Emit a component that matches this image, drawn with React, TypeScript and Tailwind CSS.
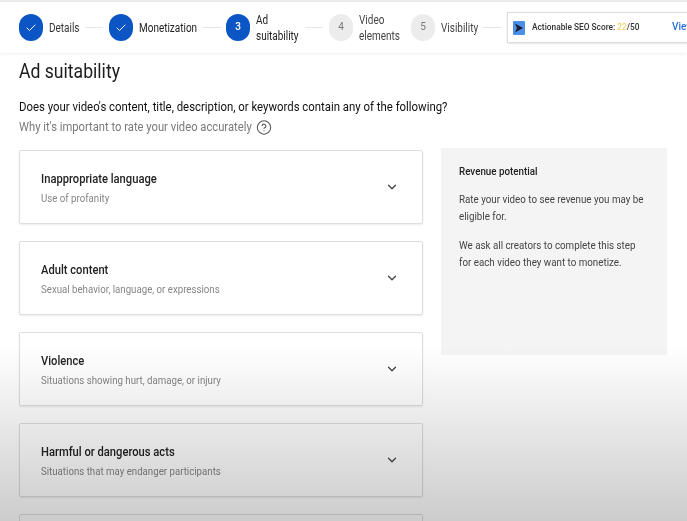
import type { ReactNode } from 'react';
import { Check, ChevronDown, CircleHelp } from 'lucide-react';

const ratings = [
  { title: 'Inappropriate language', note: 'Use of profanity' },
  { title: 'Adult content', note: 'Sexual behavior, language, or expressions' },
  { title: 'Violence', note: 'Situations showing hurt, damage, or injury' },
  { title: 'Harmful or dangerous acts', note: 'Situations that may endanger participants' },
];

function Line({ className }: { className: string }) {
  return <div className={`h-px w-[18px] shrink-0 bg-[#e6e6e6] ${className}`} />;
}

function Dot({ done, children }: { done?: boolean; children: ReactNode }) {
  return (
    <div
      className={`flex h-[27px] w-[24px] shrink-0 items-center justify-center rounded-full text-[10px] ${
        done ? 'bg-[#0b55c4] font-medium text-white' : 'bg-[#ececec] text-[#777]'
      }`}
    >
      {children}
    </div>
  );
}

function Label({ className, children }: { className: string; children: ReactNode }) {
  return (
    <span className={`ml-[6px] mt-px block shrink-0 ${className}`}>
      <span className="block w-max origin-left scale-x-[0.83]">{children}</span>
    </span>
  );
}

function Stepper() {
  return (
    <div className="flex h-[51px] items-center whitespace-nowrap pl-[19px] text-[12px] leading-[16.5px] text-[#333] shadow-[0_1px_3px_rgba(0,0,0,0.07)]">
      <Dot done>
        <Check className="h-3 w-3" strokeWidth={2} />
      </Dot>
      <Label className="w-[29px]">Details</Label>
      <Line className="ml-[7px]" />
      <div className="ml-[6px] shrink-0">
        <Dot done>
          <Check className="h-3 w-3" strokeWidth={2} />
        </Dot>
      </div>
      <Label className="w-[57px] text-[#222]">Monetization</Label>
      <Line className="ml-[7px]" />
      <div className="ml-[5px] shrink-0">
        <Dot done>3</Dot>
      </div>
      <Label className="w-[43px] text-[#222]">
        Ad
        <br />
        suitability
      </Label>
      <Line className="ml-[6px]" />
      <div className="ml-[6px] shrink-0">
        <Dot>4</Dot>
      </div>
      <Label className="w-[40px] text-[#444]">
        Video
        <br />
        elements
      </Label>
      <div className="ml-[12px] shrink-0">
        <Dot>5</Dot>
      </div>
      <Label className="w-[37px] text-[#444]">Visibility</Label>
      <Line className="ml-[5px]" />
      <div className="ml-[6px] flex h-[31px] w-[200px] shrink-0 items-center border border-[#dcdcdc] bg-white pl-[5px] shadow-[0_1px_2px_rgba(0,0,0,0.1)]">
        <svg viewBox="0 0 12 14" className="h-[14px] w-[12px] shrink-0">
          <rect width="12" height="14" rx="1" fill="#4a90e8" />
          <path d="M2 2.5 10 7 2 11.5 4 7Z" fill="#1d1d2b" />
        </svg>
        <span className="ml-[7px] block w-[107px] shrink-0">
          <span className="block w-max origin-left scale-x-[0.877] text-[9.5px] font-medium text-[#333]">
            Actionable SEO Score: <span className="text-[#f5cf6b]">22</span>/50
          </span>
        </span>
        <span className="ml-[33px] shrink-0 text-[10px] font-medium text-[#2a6fd6]">View</span>
      </div>
    </div>
  );
}

export default function App() {
  return (
    <div className="relative h-[521px] w-[687px] overflow-hidden bg-white font-['Roboto',sans-serif]">
      <div className="blur-[0.4px]">
        <div className="h-[2px] bg-[#ececec]" />
        <Stepper />

        <div className="px-[19px]">
          <h1 className="mt-[6px] w-max origin-left scale-x-[0.88] text-[20px] leading-[24px] text-[#1c1c1c]">
            Ad suitability
          </h1>
          <p className="mt-[14px] w-max origin-left scale-x-[0.875] text-[13px] leading-[20px] text-[#111]">
            Does your video's content, title, description, or keywords contain any of the following?
          </p>
          <div className="flex items-center text-[13px] leading-[20px] text-[#7a7a7a]">
            <span className="block w-[233px] shrink-0">
              <span className="block w-max origin-left scale-x-[0.863]">
                Why it's important to rate your video accurately
              </span>
            </span>
            <CircleHelp className="ml-[4px] h-[17px] w-[16px] text-[#555]" strokeWidth={1.6} />
          </div>

          <div className="mt-[12.5px] flex items-start gap-[18px]">
            <div className="flex w-[404px] shrink-0 flex-col gap-[17px]">
              {ratings.map((r) => (
                <div
                  key={r.title}
                  className="flex h-[74px] shrink-0 items-center justify-between rounded-[2px] border border-[#dedede] bg-white pl-[21px] pr-[23px] shadow-[0_1px_2px_rgba(0,0,0,0.08)]"
                >
                  <div className="mt-[5px]">
                    <div className="w-max origin-left scale-x-[0.86] text-[13px] font-medium leading-[18px] text-[#222]">
                      {r.title}
                    </div>
                    <div className="mt-[2px] w-max origin-left scale-x-[0.88] text-[11px] leading-[18px] text-[#858585]">
                      {r.note}
                    </div>
                  </div>
                  <ChevronDown className="h-[14px] w-[14px] text-[#444]" strokeWidth={2.25} />
                </div>
              ))}
              <div className="h-[74px] shrink-0 rounded-[2px] border border-[#dedede] bg-white" />
            </div>

            <div className="-mt-[1.5px] h-[207px] w-[226px] shrink-0 bg-[#f4f4f4] px-[18px] pt-[15px] text-[11px] leading-[17px] text-[#444]">
              <div className="w-max origin-left scale-x-[0.89] font-medium text-[#222]">Revenue potential</div>
              <p className="mt-[11px] w-max origin-left scale-x-[0.89]">
                Rate your video to see revenue you may be
                <br />
                eligible for.
              </p>
              <p className="mt-[12px] w-max origin-left scale-x-[0.89]">
                We ask all creators to complete this step
                <br />
                for each video they want to monetize.
              </p>
            </div>
          </div>
        </div>
      </div>

      {/* fade over the lower part of the page */}
      <div className="pointer-events-none absolute inset-x-0 bottom-0 h-[175px] bg-gradient-to-b from-black/0 to-black/20" />
    </div>
  );
}
